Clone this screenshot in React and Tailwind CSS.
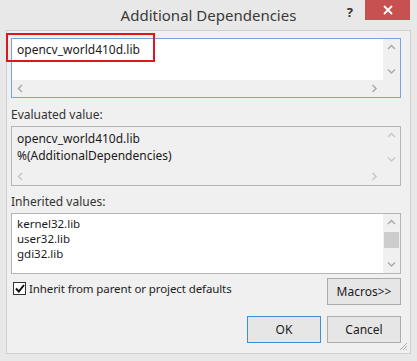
import React from "react";

const font = { fontFamily: '"Noto Sans", "Liberation Sans", sans-serif' };

function Chevron({ dir, className = "" }) {
  const pts = {
    up: "1,5 4.5,1.5 8,5",
    down: "1,1.5 4.5,5 8,1.5",
    left: "5,1 1.5,4.5 5,8",
    right: "1.5,1 5,4.5 1.5,8",
  }[dir];
  const vert = dir === "up" || dir === "down";
  return (
    <svg
      width={vert ? 9 : 7}
      height={vert ? 7 : 9}
      viewBox={vert ? "0 0 9 7" : "0 0 7 9"}
      className={className}
    >
      <polyline points={pts} fill="none" stroke="currentColor" strokeWidth="1.5" />
    </svg>
  );
}

function VScroll({ thumb, muted }) {
  const tone = muted ? "text-[#c8c8c8]" : "text-[#ababab]";
  return (
    <div className="flex w-[17px] flex-col bg-[#f0f0f0]">
      <div className={`flex h-[17px] items-center justify-center ${tone}`}>
        <Chevron dir="up" />
      </div>
      <div className="flex flex-1 justify-center px-[1px]">
        {thumb && <div className="mt-[1px] h-[16px] w-full bg-[#cdcdcd]" />}
      </div>
      <div className={`flex h-[17px] items-center justify-center ${tone}`}>
        <Chevron dir="down" />
      </div>
    </div>
  );
}

function HScroll({ muted }) {
  const tone = muted ? "text-[#c8c8c8]" : "text-[#ababab]";
  return (
    <div className="flex h-[17px] items-center justify-between bg-[#f0f0f0]">
      <div className={`flex w-[17px] justify-center ${tone}`}>
        <Chevron dir="left" />
      </div>
      <div className={`flex w-[17px] justify-center ${tone}`}>
        <Chevron dir="right" />
      </div>
    </div>
  );
}

function Button({ children, focused }) {
  return (
    <button
      className={`flex h-[27px] w-[74px] items-center justify-center border text-[12px] text-[#1b1b1b] ${
        focused ? "border-[#3c8fd8] bg-[#e6e6e6]" : "border-[#acacac] bg-[#e6e6e6]"
      }`}
    >
      {children}
    </button>
  );
}

export default function App() {
  return (
    <div
      className="relative flex h-[361px] w-[417px] flex-col bg-[#e8e8e8] px-[6px] pb-[7px]"
      style={font}
    >
      {/* title bar */}
      <div className="relative flex h-[30px] items-center justify-center">
        <span className="pt-[1px] text-[15px] text-[#3a3a3a]">Additional Dependencies</span>
        <span className="absolute right-[58px] top-[3px] text-[13px] font-bold text-[#333]">?</span>
        <div className="absolute right-[1px] top-0 flex h-[20px] w-[45px] items-center justify-center bg-[#c75050] text-white">
          <svg width="10" height="10" viewBox="0 0 10 10">
            <path d="M1 1L9 9M9 1L1 9" stroke="white" strokeWidth="1.8" />
          </svg>
        </div>
      </div>

      {/* client area */}
      <div className="relative flex flex-1 flex-col border border-[#cfcfcf] bg-[#f0f0f0] px-[4px] pt-[7px] text-[12px] text-[#1a1a1a]">
        {/* edit box */}
        <div className="flex h-[60px] w-[390px] flex-col border border-[#7aa3d9] bg-white">
          <div className="flex flex-1">
            <div className="flex-1 pl-[5px] pt-[3px] leading-[16px]">opencv_world410d.lib</div>
            <VScroll />
          </div>
          <div className="flex">
            <div className="flex-1">
              <HScroll />
            </div>
            <div className="w-[17px] bg-[#f0f0f0]" />
          </div>
        </div>

        <div className="mt-[9px] h-[16px] leading-[16px] text-[#333]">Evaluated value:</div>

        <div className="mt-[3px] flex h-[60px] w-[390px] flex-col border border-[#b5b5b5] bg-[#f0f0f0]">
          <div className="flex flex-1">
            <div className="flex-1 pl-[5px] pt-[3px] leading-[17px]">
              <div>opencv_world410d.lib</div>
              <div>%(AdditionalDependencies)</div>
            </div>
            <VScroll muted />
          </div>
          <div className="flex">
            <div className="flex-1">
              <HScroll muted />
            </div>
            <div className="w-[17px]" />
          </div>
        </div>

        <div className="mt-[8px] h-[16px] leading-[16px] text-[#333]">Inherited values:</div>

        <div className="mt-[3px] flex h-[61px] w-[390px] border border-[#b5b5b5] bg-white">
          <div className="flex flex-1 flex-col pl-[5px] pt-[2px] text-[11.5px] leading-[15px]">
            <div>kernel32.lib</div>
            <div>user32.lib</div>
            <div>gdi32.lib</div>
          </div>
          <VScroll thumb />
        </div>

        <div className="mt-[4px] flex w-[390px] items-start justify-between">
          <label className="mt-[2px] flex items-center gap-[3px] pl-[2px]">
            <span className="flex h-[13px] w-[13px] items-center justify-center border border-[#333] bg-white">
              <svg width="10" height="9" viewBox="0 0 10 9">
                <path d="M1 4.5L3.8 7.5L9 1" fill="none" stroke="#111" strokeWidth="2" />
              </svg>
            </span>
            <span className="text-[11.5px] tracking-[-0.1px] text-[#222]">
              Inherit from parent or project defaults
            </span>
          </label>
          <Button>Macros&gt;&gt;</Button>
        </div>

        <div className="mt-[11px] flex w-[390px] justify-end gap-[6px]">
          <Button focused>OK</Button>
          <Button>Cancel</Button>
        </div>

        {/* red highlight annotation */}
        <div className="pointer-events-none absolute left-[-1px] top-[2px] h-[29px] w-[149px] border-2 border-[#e3141b]" />

        {/* size grip */}
        <svg className="absolute bottom-[2px] right-[2px]" width="10" height="10" viewBox="0 0 10 10">
          <path d="M9 2L2 9M9 5L5 9M9 8L8 9" stroke="#b0b0b0" strokeWidth="1" />
        </svg>
      </div>
    </div>
  );
}
